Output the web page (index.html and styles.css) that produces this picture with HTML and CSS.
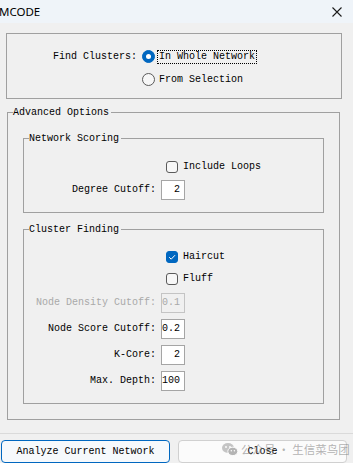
FILE: index.html
```html
<!DOCTYPE html>
<html lang="en">
<head>
    <meta charset="UTF-8">
    <meta name="viewport" content="width=device-width, initial-scale=1.0">
    <title>MCODE</title>
    <link rel="stylesheet" href="styles.css">
</head>
<body>
    <div class="window">
        <!-- Title bar -->
        <div class="titlebar">
            <span class="title">MCODE</span>
            <svg class="close-x" width="10" height="10" viewBox="0 0 10 10">
                <path d="M0.5 0.5 L9.5 9.5 M9.5 0.5 L0.5 9.5" stroke="#1b1b1b" stroke-width="1.1" fill="none"/>
            </svg>
        </div>

        <div class="content">
            <!-- Scope -->
            <div class="group scope">
                <div class="scope-row">
                    <span class="scope-label">Find Clusters:</span>
                    <span class="radio checked"></span>
                    <span class="focus">In Whole Network</span>
                </div>
                <div class="scope-row">
                    <span class="scope-label"></span>
                    <span class="radio"></span>
                    <span>From Selection</span>
                </div>
            </div>

            <!-- Advanced Options -->
            <fieldset class="group advanced">
                <legend>Advanced Options</legend>
                <div class="advanced-body">
                    <fieldset class="group sub scoring">
                        <legend>Network Scoring</legend>
                        <div class="sub-body">
                            <div class="check-row"><span class="checkbox"></span>Include Loops</div>
                            <div class="field-row">
                                <span class="label">Degree Cutoff:</span>
                                <span class="num">2</span>
                            </div>
                        </div>
                    </fieldset>

                    <fieldset class="group sub finding">
                        <legend>Cluster Finding</legend>
                        <div class="sub-body">
                            <div class="check-row">
                                <span class="checkbox checked">
                                    <svg width="10" height="10" viewBox="0 0 10 10"><path d="M2.2 5.2 L4.2 7.2 L8 3.2" stroke="#fff" stroke-width="1" fill="none"/></svg>
                                </span>Haircut
                            </div>
                            <div class="check-row"><span class="checkbox"></span>Fluff</div>
                            <div class="field-row">
                                <span class="label disabled">Node Density Cutoff:</span>
                                <span class="num disabled">0.1</span>
                            </div>
                            <div class="field-row">
                                <span class="label">Node Score Cutoff:</span>
                                <span class="num">0.2</span>
                            </div>
                            <div class="field-row">
                                <span class="label">K-Core:</span>
                                <span class="num">2</span>
                            </div>
                            <div class="field-row">
                                <span class="label">Max. Depth:</span>
                                <span class="num">100</span>
                            </div>
                        </div>
                    </fieldset>
                </div>
            </fieldset>
        </div>

        <!-- Buttons -->
        <div class="footer">
            <button class="btn btn-primary">Analyze Current Network</button>
            <button class="btn">Close</button>
            <div class="watermark">
                <svg width="16" height="13" viewBox="0 0 16 13">
                    <ellipse cx="6" cy="5" rx="6" ry="5" fill="#c4c4c4"/>
                    <ellipse cx="10.8" cy="8.4" rx="5" ry="4.2" fill="#b4b4b4" stroke="#fbfbfb" stroke-width="1"/>
                    <circle cx="4" cy="4" r="0.9" fill="#fff"/>
                    <circle cx="8" cy="4" r="0.9" fill="#fff"/>
                    <circle cx="9.3" cy="7.8" r="0.7" fill="#fff"/>
                    <circle cx="12.4" cy="7.8" r="0.7" fill="#fff"/>
                </svg>
                <span>公众号 · 生信菜鸟团</span>
            </div>
        </div>
    </div>
</body>
</html>
```

FILE: styles.css
```css
/* Global */
* {
    box-sizing: border-box;
}

body {
    margin: 0;
    background-color: #f0f0f0;
    font-family: "Liberation Mono", monospace;
    font-size: 10px;
    line-height: 12px;
    color: #000;
}

.window {
    width: 353px;
    height: 463px;
    display: flex;
    flex-direction: column;
    overflow: hidden;
}

/* Title bar */
.titlebar {
    height: 23px;
    flex-shrink: 0;
    background-color: #eff4f9;
    display: flex;
    align-items: center;
    justify-content: space-between;
    padding-right: 11px;
}

.title {
    font-family: "Noto Sans", sans-serif;
    font-size: 11.5px;
    margin-left: -1px;
}

/* Content */
.content {
    flex: 1;
    padding: 10px 11px 0 6px;
}

.group {
    border: 1px solid #a0a0a0;
    margin: 0;
    padding: 0;
    min-width: 0;
}

legend {
    margin-left: 5px;
    padding: 0 2px 0 0;
    line-height: 13px;
}

/* Find Clusters box */
.scope {
    padding: 11px 0 7px;
}

.scope-row {
    display: flex;
    align-items: center;
    height: 23px;
}

.scope-label {
    width: 130px;
    margin-right: 5px;
    text-align: right;
}

.radio {
    width: 13px;
    height: 13px;
    flex-shrink: 0;
    border-radius: 50%;
    border: 1px solid #5a5a5a;
    background-color: #f7f7f7;
    margin-right: 4px;
}

.radio.checked {
    background-color: #0067c0;
    border-color: #0067c0;
    display: flex;
    align-items: center;
    justify-content: center;
    margin-right: 2px;
}

.radio.checked::after {
    content: "";
    width: 5px;
    height: 5px;
    border-radius: 50%;
    background-color: #fff;
}

.focus {
    border: 1px dotted #000;
    padding: 0 1px;
}

/* Advanced Options */
.advanced {
    margin: 7px 0 0 1px;
    width: 333px;
}

.advanced-body {
    padding: 13px 15px 15px;
}

.sub + .sub {
    margin-top: 10px;
}

.scoring .sub-body {
    padding: 11px 0 10px;
}

.finding .sub-body {
    padding: 10px 0 9px;
}

.check-row {
    display: flex;
    align-items: center;
    gap: 5px;
    height: 22px;
    padding-left: 142px;
}

.checkbox {
    width: 12px;
    height: 12px;
    flex-shrink: 0;
    border: 1px solid #5a5a5a;
    border-radius: 3px;
    background-color: #f7f7f7;
}

.checkbox.checked {
    background-color: #0067c0;
    border-color: #0067c0;
    display: flex;
    align-items: center;
    justify-content: center;
}

.field-row {
    display: grid;
    grid-template-columns: 132px 24px;
    column-gap: 5px;
    align-items: center;
    height: 26px;
}

.scoring .field-row {
    height: 24px;
}

.label {
    text-align: right;
    white-space: nowrap;
}

.label.disabled {
    color: #a9a9a9;
}

.num {
    height: 20px;
    border: 1px solid #a5a5a5;
    background-color: #fff;
    display: flex;
    align-items: center;
    justify-content: flex-end;
    padding-right: 4px;
    overflow: hidden;
    white-space: nowrap;
}

.num.disabled {
    background-color: transparent;
    border-color: #c4c4c4;
    color: #a9a9a9;
}

/* Footer */
.footer {
    position: relative;
    height: 30px;
    flex-shrink: 0;
    border-top: 1px solid #dadada;
    padding: 6px 0 0 1px;
    display: flex;
    align-items: flex-start;
    gap: 8px;
}

.btn {
    width: 169px;
    height: 23px;
    border: 1px solid #d0d0d0;
    border-radius: 4px;
    background-color: #fbfbfb;
    font-family: inherit;
    font-size: 10px;
    color: #000;
    padding: 0;
}

.btn-primary {
    border-color: #0067c0;
    background-color: #f6f9fc;
}

.watermark {
    position: absolute;
    left: 222px;
    top: 7px;
    display: flex;
    align-items: center;
    gap: 3px;
    white-space: nowrap;
    font-family: "Noto Sans CJK SC", sans-serif;
    font-size: 11.5px;
    line-height: 16px;
    color: rgba(130, 130, 130, 0.6);
    pointer-events: none;
}
```
